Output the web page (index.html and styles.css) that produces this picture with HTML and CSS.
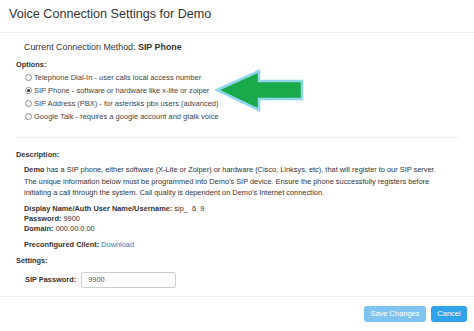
FILE: index.html
```html
<!DOCTYPE html>
<html lang="en">
<head>
    <meta charset="UTF-8">
    <title>Voice Connection Settings</title>
    <link rel="stylesheet" href="styles.css">
</head>
<body>
    <div class="modal">
        <div class="modal-header">
            <h4 class="modal-title">Voice Connection Settings for Demo</h4>
        </div>
        <div class="modal-body">
            <p class="current">Current Connection Method: <b>SIP Phone</b></p>

            <div class="options">
                <div class="label">Options:</div>
                <label class="radio"><input type="radio" name="method"> Telephone Dial-In - user calls local access number</label>
                <label class="radio"><input type="radio" name="method" checked> SIP Phone - software or hardware like x-lite or zoiper</label>
                <label class="radio"><input type="radio" name="method"> SIP Address (PBX) - for asterisks pbx users (advanced)</label>
                <label class="radio"><input type="radio" name="method"> Google Talk - requires a google account and gtalk voice</label>

                <!-- pointer drawn over the options list -->
                <svg class="arrow" width="92" height="46" viewBox="0 0 92 46">
                    <polygon points="3,22 45,3 45,13 88,13 88,31 45,31 45,42" fill="#1aa94b" stroke="#8ed6e8" stroke-width="2.5"/>
                </svg>
            </div>

            <hr class="sep">

            <div class="label">Description:</div>
            <div class="desc">
                <p><b>Demo</b> has a SIP phone, either software (X-Lite or Zoiper) or hardware (Cisco, Linksys, etc), that will register to our SIP server. The unique information below must be programmed into Demo's SIP device. Ensure the phone successfully registers before initiating a call through the system. Call quality is dependent on Demo's Internet connection.</p>
                <div class="creds">
                    <div><b>Display Name/Auth User Name/Username:</b> sip_&nbsp; 6&nbsp; 9</div>
                    <div><b>Password:</b> 9900</div>
                    <div><b>Domain:</b> 000.00.0.00</div>
                </div>
                <div class="client"><b>Preconfigured Client:</b> <a href="#">Download</a></div>
            </div>

            <div class="label">Settings:</div>
            <div class="field">
                <b>SIP Password:</b>
                <input type="text" value="9900">
            </div>
        </div>
        <div class="modal-footer">
            <button class="btn btn-save" disabled>Save Changes</button>
            <button class="btn btn-cancel">Cancel</button>
        </div>
    </div>
</body>
</html>
```

FILE: styles.css
```css
body {
    margin: 0;
    background-color: #fff;
    color: #333;
    font-family: "Liberation Sans", Arial, sans-serif;
}

.modal {
    width: 474px;
}

.modal-header {
    padding: 3px 9px 7px;
    border-bottom: 1px solid #ececec;
}

.modal-title {
    margin: 0;
    font-size: 12.6px;
    font-weight: normal;
    line-height: 22px;
    color: #333;
}

.modal-body {
    padding: 8px 16px 8px;
    font-size: 7.4px;
}

.current {
    margin: 0 0 6px 8px;
    font-size: 8.9px;
    line-height: 12px;
}

.label {
    font-weight: bold;
    font-size: 7.4px;
    line-height: 12px;
}

.options {
    position: relative;
}

.radio {
    display: flex;
    align-items: center;
    height: 13px;
    font-size: 7.5px;
    color: #444;
}

.radio input {
    appearance: none;
    width: 7px;
    height: 7px;
    margin: 0 2px 0 9px;
    border: 1px solid #8c8c8c;
    border-radius: 50%;
    background: #fff;
    box-sizing: border-box;
    display: grid;
    place-content: center;
}

.radio input:checked::before {
    content: "";
    width: 3px;
    height: 3px;
    border-radius: 50%;
    background: #333;
}

.arrow {
    position: absolute;
    left: 198px;
    top: 9px;
}

.sep {
    border: 0;
    border-top: 1px solid #ececec;
    margin: 14px 0 11px;
}

.desc {
    padding-left: 8px;
    width: 420px;
}

.desc p {
    margin: 3px 0 5px;
    line-height: 11.5px;
}

.creds {
    line-height: 10px;
    margin-bottom: 6px;
}

.client {
    line-height: 10px;
    margin-bottom: 5px;
}

.client a {
    color: #337ab7;
    text-decoration: none;
}

.field {
    display: flex;
    align-items: center;
    gap: 5px;
    padding-left: 9px;
    margin-top: 5px;
}

.field input {
    width: 95px;
    height: 16px;
    box-sizing: border-box;
    border: 1px solid #ccc;
    border-radius: 2px;
    padding: 0 6px;
    font-family: "Liberation Sans", Arial, sans-serif;
    font-size: 7.4px;
    color: #555;
}

.modal-footer {
    border-top: 1px solid #ececec;
    padding: 9px 7px;
    display: flex;
    justify-content: flex-end;
    gap: 5px;
}

.btn {
    border: none;
    border-radius: 3px;
    color: #fff;
    font-family: "Liberation Sans", Arial, sans-serif;
    font-size: 7.5px;
    height: 16px;
    padding: 0;
}

.btn-save {
    background-color: #7fc3f1;
    width: 62px;
}

.btn-cancel {
    background-color: #2fa4ea;
    width: 36px;
}
```
